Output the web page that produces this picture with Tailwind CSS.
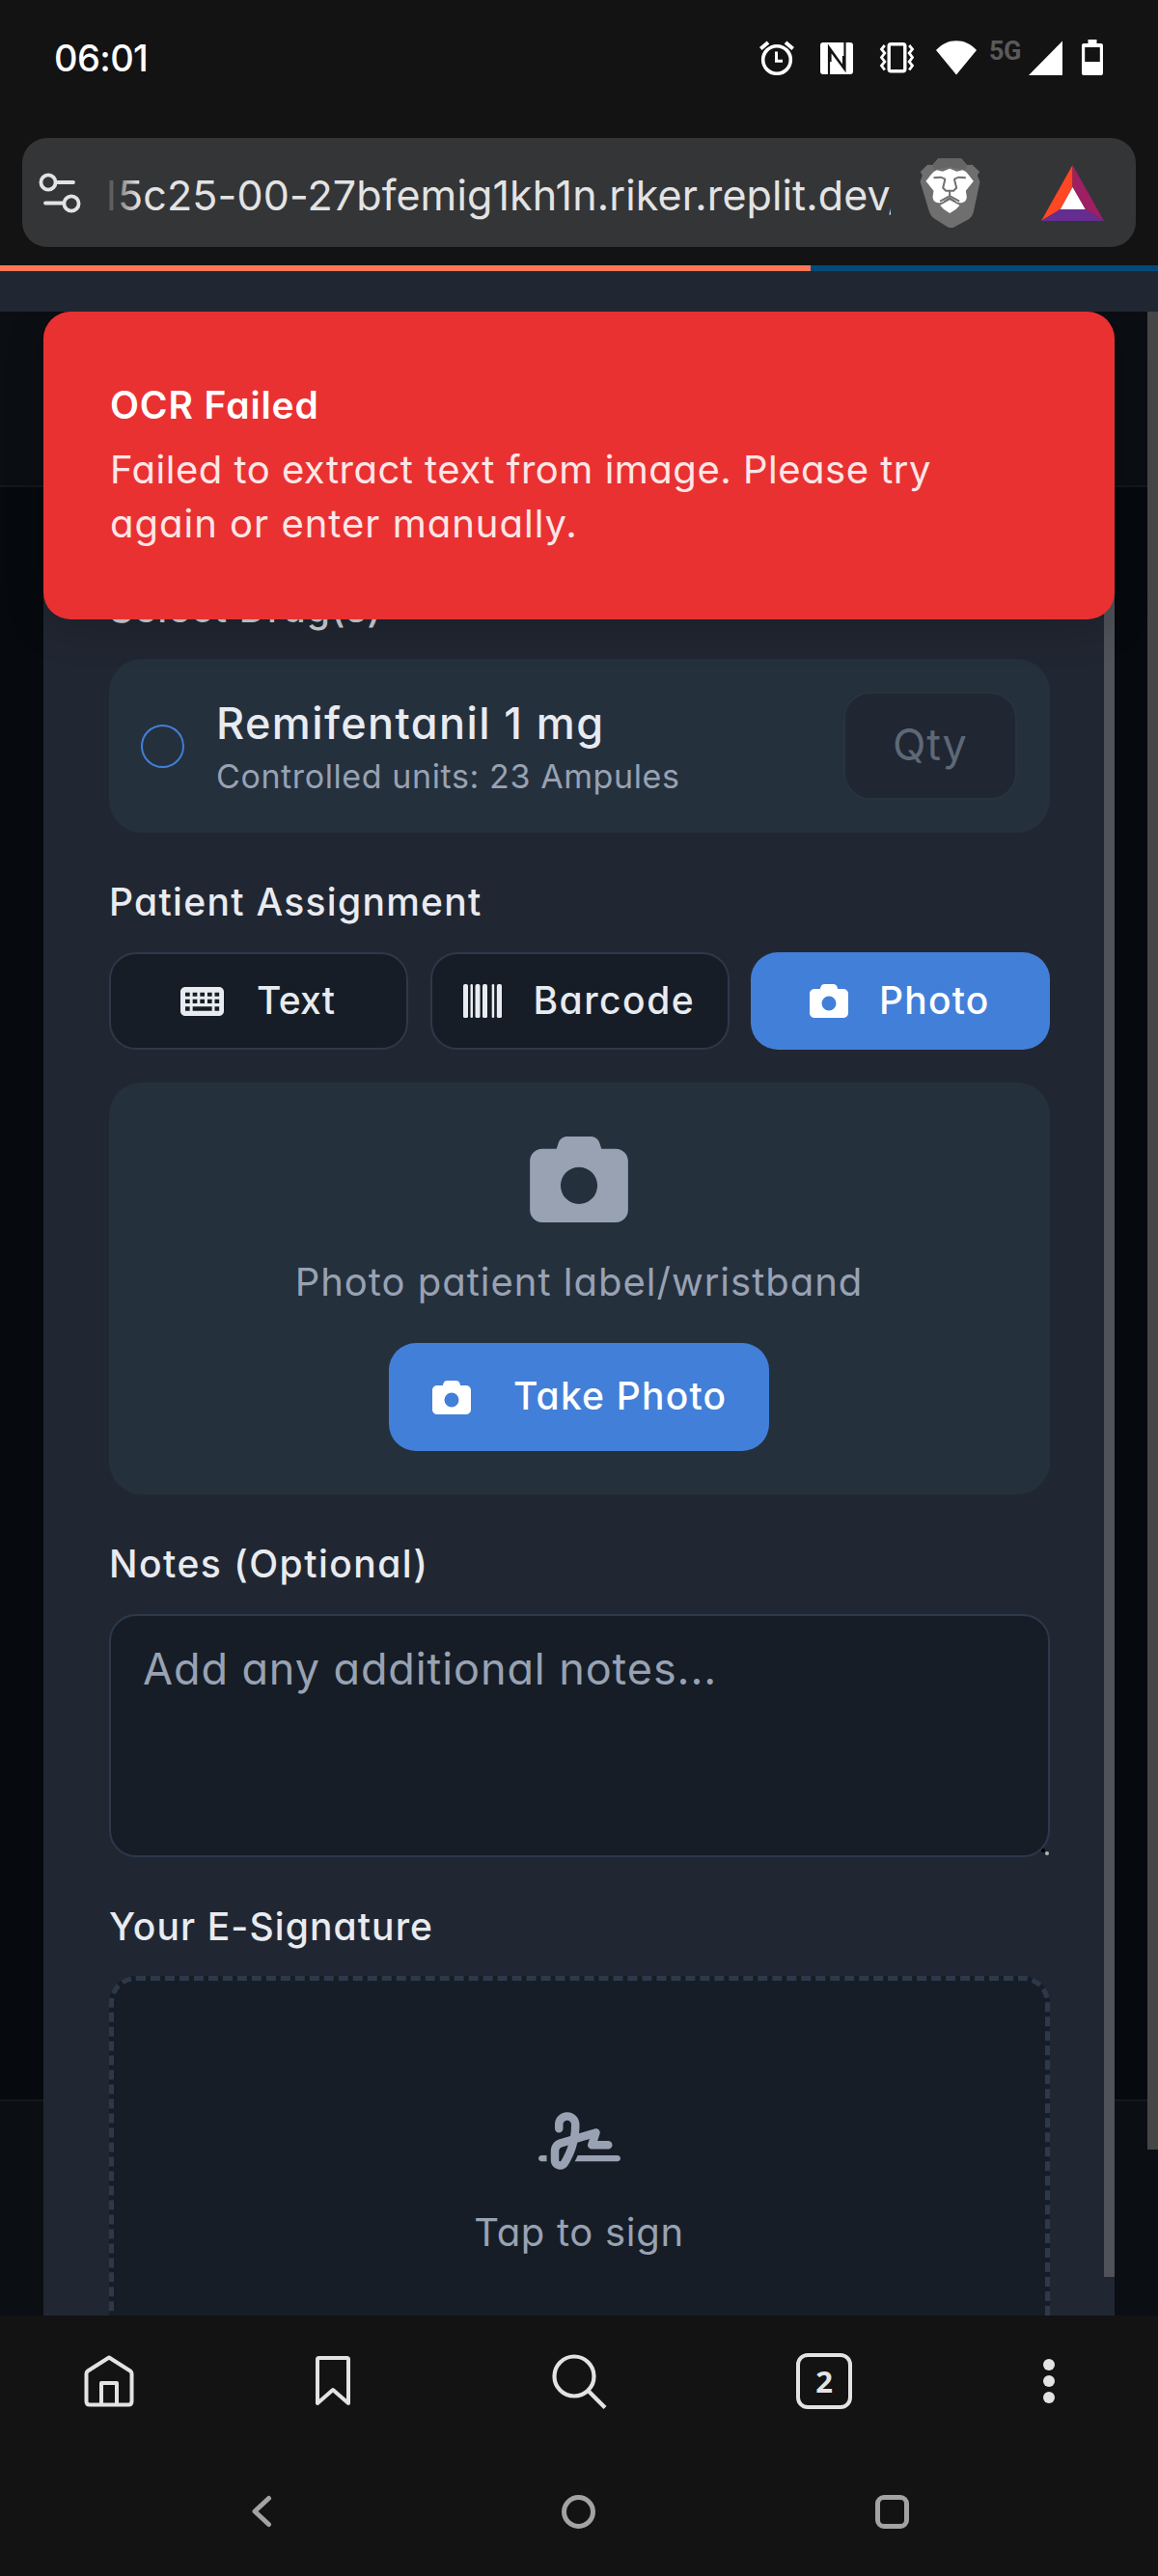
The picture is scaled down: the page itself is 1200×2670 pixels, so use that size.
<!DOCTYPE html>
<html lang="en">
<head>
<meta charset="utf-8">
<title>Patient Assignment</title>
<script src="https://cdn.jsdelivr.net/npm/@tailwindcss/browser@4"></script>
</head>
<body class="bg-[#131313] font-['Inter',sans-serif] [font-feature-settings:'cv11']">
<svg class="hidden">
  <symbol id="camera" viewBox="0 32 512 448"><path fill="currentColor" d="M149.1 64.8L138.7 96H64C28.7 96 0 124.7 0 160V416c0 35.3 28.7 64 64 64H448c35.3 0 64-28.7 64-64V160c0-35.3-28.7-64-64-64H373.3L362.9 64.8C356.4 45.2 338.1 32 317.4 32H194.6c-20.7 0-39 13.2-45.5 32.8zM256 192a96 96 0 1 1 0 192 96 96 0 1 1 0-192z"/></symbol>
</svg>
<div class="flex h-[2670px] w-[1200px] flex-col overflow-hidden bg-[#131313]">

  <!-- Status bar -->
  <header class="flex h-[143px] shrink-0 items-start pl-[56px] text-white">
    <div class="mt-[30px] w-[731px] text-[38px] leading-[60px] font-[450] tracking-[-0.6px]">06:01</div>
    <svg class="mt-[42px] h-[36px] w-[36px]" viewBox="0 0 36 36" fill="none" stroke="currentColor"><circle cx="18" cy="20" r="14.3" stroke-width="3.6"/><path d="M17.5 11.5v9.8h6.5" stroke-width="3"/><path d="M1.300 8.500 9 2M34.700 8.500 27 2" stroke-width="4"/></svg>
    <svg class="mt-[44px] ml-[27px] h-[33px] w-[34px]" viewBox="0 0 34 33"><rect width="34" height="33" rx="3" fill="#fff"/><path d="M9 33V5L24 26V14M25.500 0v28L10.500 8v12" fill="none" stroke="#131313" stroke-width="2.200"/></svg>
    <svg class="mt-[44px] ml-[27px] h-[32px] w-[37px]" viewBox="0 0 37 32" fill="none" stroke="currentColor"><rect x="10.200" y="1.700" width="16.600" height="28" rx="2" stroke-width="3.400"/><path d="M5.800 3 2.500 7l3.300 4-3.300 4.500L5.800 20l-3.300 4 3.300 4.500M31.200 3l3.300 4-3.300 4 3.300 4.500L31.200 20l3.300 4-3.300 4.500" stroke-width="2.800"/></svg>
    <svg class="mt-[42px] ml-[22px] h-[36px] w-[42px]" viewBox="0 0 42 36" fill="currentColor"><path d="M21 35.500 0 10C6 3.500 13 .3 21 .3S36 3.500 42 10z"/></svg>
    <div class="mt-[37px] ml-[13px] w-[41px] font-['Roboto'] text-[27px] leading-[32px] font-bold tracking-[-0.5px] text-[#5a5a5a]">5G</div>
    <svg class="mt-[42px] h-[36px] w-[35px]" viewBox="0 0 35 36" fill="currentColor"><path d="M35 .5V36H0z"/></svg>
    <svg class="mt-[41px] ml-[20px] h-[37px] w-[22px]" viewBox="0 0 22 37"><path fill="#fff" fill-rule="evenodd" d="M6.500 0h9v4H20a2 2 0 0 1 2 2v29a2 2 0 0 1-2 2H2a2 2 0 0 1-2-2V6a2 2 0 0 1 2-2h4.500zM3.200 8v15h15.600V8z"/></svg>
  </header>

  <!-- Address bar -->
  <div class="mx-[23px] flex h-[113px] shrink-0 items-center rounded-[26px] bg-[#343537]">
    <svg class="ml-[17px] h-[42px] w-[44px]" viewBox="0 0 44 42" fill="none" stroke="#e3e3e3" stroke-width="3.800" stroke-linecap="round"><circle cx="10" cy="10" r="7.600"/><path d="M19 10h17M7 31.500h18"/><circle cx="34" cy="32" r="7.600"/></svg>
    <div class="relative ml-[26px] h-[113px] w-[813px] overflow-hidden">
      <div class="pt-[17px] text-[43px] leading-[84px] font-[430] tracking-[0.12px] whitespace-nowrap text-[#e3e3e3]"><span class="inline-block w-[12px]">l</span>5c25-00-27bfemig1kh1n.riker.replit.dev/</div>
      <div class="absolute inset-y-0 left-0 w-[34px] bg-gradient-to-r from-[#343537]/90 to-[#343537]/0"></div>
    </div>
    <svg class="ml-[30px] h-[72px] w-[63px]" viewBox="39 28 188 216">
      <path fill="#6f6f70" d="M96 29h72l18 20 16-1 23 22-7 11 8 20-20 94q-3 14-14 22l-48 26q-12 3-20-2l-38-24q-13-8-18-24L40 101l7-20-6-11 22-22 16 1z"/>
      <path fill="#656566" d="M96 29h72l18 20-6 14-48-8-48 8-6-14z"/>
      <path fill="#fff" d="M92 65l18 4 22-9 22 9 18-4q12 4 18 14l16 20-24 30 3 20q-2 16-16 18-14 0-20-8l-17-11-17 11q-6 8-20 8-14-2-16-18l3-20-24-30 16-20q8-10 18-14z"/>
      <path fill="#fff" d="M132 158l31 16-11 12-20 13-19-13-11-12z"/>
      <path fill="none" stroke="#6f6f70" stroke-width="6" d="M82 89l22-2 14 6M182 89l-22-2-14 6M118 92l-7 28 9 9h24l9-9-7-28M132 131v14l-30 17M132 145l30 17"/>
    </svg>
    <svg class="ml-[63px] h-[58px] w-[65px]" viewBox="0 0 65 58"><path fill="#ff4724" d="M32.500 0v23L19.800 46 0 58z"/><path fill="#9e1f63" d="M32.500 0 65 58 45.700 46 32.500 23z"/><path fill="#662d91" d="M0 58l19.800-12h25.900L65 58z"/><path fill="#fff" d="M32.500 23l13.200 23H19.800z"/></svg>
  </div>
  <div class="mt-[19px] h-[6px] shrink-0 bg-[#004a77]"><div class="h-full bg-[#ff7654]" style="width:70%"></div></div>
  <div class="h-[42px] shrink-0 bg-[#212732]"></div>

  <!-- Page -->
  <main class="relative flex h-[2077px] shrink-0 flex-col overflow-hidden bg-[#0b0e12]">
    <div class="h-[180px] shrink-0"></div>
    <div class="h-[1675px] shrink-0 border-y-2 border-[#14171b] bg-[#06090d]"></div>
    <div class="absolute top-0 right-0 h-[1905px] w-[11px] bg-[#464646]"></div>

    <!-- Dialog -->
    <section class="absolute top-[40px] bottom-0 left-[45px] w-[1110px] bg-[#212732] pt-[240px] pr-[67px] pl-[68px] text-[#e8ebf0]">
      <div class="absolute top-0 right-0 h-[1997px] w-[11px] bg-[#505259]"></div>
      <h2 class="mb-6 text-[39px] leading-[56px] font-medium tracking-[1.1px] text-[#d3d6da]">Select Drug(s)</h2>

      <div class="flex h-[180px] items-center rounded-[34px] bg-[#25303d] pr-[34px] pl-[33px]">
        <span class="h-[45px] w-[45px] rounded-full border-2 border-[#427fd8]"></span>
        <div class="ml-[33px] flex-1 pt-[2px]">
          <div class="text-[45px] leading-[62px] font-medium tracking-[1.4px]">Remifentanil 1 mg</div>
          <div class="text-[34px] leading-[48px] tracking-[0.6px] text-[#98a2b3]">Controlled units: 23 Ampules</div>
        </div>
        <div class="h-[112px] w-[180px] rounded-[28px] border-2 border-[#27333f] bg-[#202632] pl-[49px] text-[45px] leading-[106px] tracking-[0.8px] text-[#5d6877]">Qty</div>
      </div>

      <h2 class="mt-11 mb-6 text-[39px] leading-[56px] font-medium tracking-[1.3px]">Patient Assignment</h2>
      <div class="grid grid-cols-3 gap-[22.5px] text-[39px] leading-[95px] font-medium">
        <div class="flex h-[101px] items-center rounded-[28px] border-2 border-[#2d394b] bg-[#161d26] pl-[72px]">
          <svg class="h-[30px] w-[45px]" viewBox="0 64 576 384"><path fill="currentColor" fill-rule="evenodd" d="M64 64C28.700 64 0 92.700 0 128V384c0 35.300 28.700 64 64 64H512c35.300 0 64-28.700 64-64V128c0-35.300-28.700-64-64-64zM64 136h60v52H64zM162 136h60v52h-60zM260 136h60v52h-60zM358 136h60v52h-60zM454 136h60v52h-60zM64 228h60v52H64zM162 228h60v52h-60zM260 228h60v52h-60zM358 228h60v52h-60zM454 228h60v52h-60zM64 324h60v56H64zM162 324h256v56H162zM454 324h60v56h-60z"/></svg>
          <span class="-mt-[2px] ml-[34px] tracking-[0.3px]">Text</span>
        </div>
        <div class="flex h-[101px] items-center rounded-[28px] border-2 border-[#2d394b] bg-[#161d26] pl-[32px]">
          <svg class="h-[35px] w-[40px]" viewBox="0 32 512 448" fill="currentColor"><rect y="32" width="64" height="448" rx="24"/><rect x="96" y="32" width="32" height="448" rx="16"/><rect x="160" y="32" width="64" height="448" rx="24"/><rect x="256" y="32" width="64" height="448" rx="24"/><rect x="380" y="32" width="32" height="448" rx="16"/><rect x="446" y="32" width="66" height="448" rx="24"/></svg>
          <span class="-mt-[2px] ml-[33px] tracking-[1.5px]">Barcode</span>
        </div>
        <div class="flex h-[101px] items-center rounded-[28px] bg-[#427fd8] pl-[61px] text-white">
          <svg class="h-[35px] w-[40px]"><use href="#camera"/></svg>
          <span class="-mt-[2px] ml-[32px] tracking-[1.2px]">Photo</span>
        </div>
      </div>

      <div class="mt-[34px] flex h-[427px] flex-col items-center rounded-[34px] bg-[#25303d] pt-[56px] pr-[1px]">
        <svg class="h-[89px] w-[102px] text-[#98a2b3]"><use href="#camera"/></svg>
        <p class="mt-[34px] text-[40px] leading-[56px] tracking-[1px] text-[#98a2b3]">Photo patient label/wristband</p>
        <div class="mt-[35px] flex h-[112px] w-[394px] items-center rounded-[28px] bg-[#427fd8] pl-[45px] text-white">
          <svg class="h-[35px] w-[40px]"><use href="#camera"/></svg>
          <span class="-mt-[2px] ml-[44px] text-[39px] leading-[56px] font-medium tracking-[1.2px]">Take Photo</span>
        </div>
      </div>

      <h2 class="mt-11 mb-6 text-[39px] leading-[56px] font-medium tracking-[1.5px]">Notes (Optional)</h2>
      <div class="relative h-[252px] rounded-[28px] border-2 border-[#2d394b] bg-[#161d26] pt-[24px] pl-[33px] text-[45px] leading-[62px] tracking-[0.9px] text-[#98a2b3]">Add any additional notes...
        <span class="absolute right-[3px] bottom-[3px] h-[4px] w-[4px] rounded-full bg-black"></span>
        <span class="absolute -right-[1px] bottom-[0px] h-[4px] w-[4px] rounded-full bg-[#b4b6b9]"></span>
      </div>

      <h2 class="mt-11 mb-[23px] text-[39px] leading-[56px] font-medium tracking-[1.1px]">Your E-Signature</h2>
      <div class="flex h-[427px] flex-col items-center rounded-[28px] border-5 border-dashed border-[#2d394b] bg-[#161d26] pt-[136px] pr-[1px] text-[#98a2b3]">
        <svg class="h-[60px] w-[85px]" viewBox="0 32 640 448"><path fill="currentColor" d="M192 128c0-17.700 14.300-32 32-32s32 14.300 32 32v7.800c0 27.700-2.400 55.300-7.100 82.500l-84.400 25.300c-40.600 12.200-68.400 49.600-68.400 92v71.900c0 40 32.500 72.500 72.500 72.500c26 0 50-13.900 62.900-36.500l13.900-24.300c26.800-47 46.500-97.700 58.400-150.500l94.400-28.300-12.500 37.500c-3.300 9.800-1.600 20.500 4.400 28.800s15.700 13.300 26 13.300H544c17.700 0 32-14.300 32-32s-14.300-32-32-32H460.400l18-53.900c3.800-11.300 .9-23.800-7.400-32.400s-20.700-11.800-32.200-8.400L316.400 198.100c2.400-20.700 3.600-41.400 3.600-62.300V128c0-53-43-96-96-96s-96 43-96 96v32c0 17.700 14.300 32 32 32s32-14.300 32-32V128zm-9.200 177l49-14.700c-10.400 33.800-24.500 66.400-42.100 97.200l-13.900 24.300c-1.500 2.600-4.300 4.300-7.400 4.300c-4.700 0-8.500-3.800-8.500-8.500V335.600c0-14.100 9.300-26.600 22.800-30.700zM24 368c-13.300 0-24 10.700-24 24s10.700 24 24 24H64.300c-.2-2.800-.3-5.600-.3-8.500V368H24zm592 48c13.300 0 24-10.700 24-24s-10.700-24-24-24H305.900c-6.700 16.300-14.200 32.300-22.300 48H616z"/></svg>
        <p class="mt-[37px] text-[40px] leading-[56px] tracking-[0.7px]">Tap to sign</p>
      </div>
    </section>

    <!-- Toast -->
    <div class="absolute top-0 left-[45px] h-[319px] w-[1110px] rounded-[28px] bg-[#e93132] pt-[69px] pl-[69px] text-white shadow-[0_10px_40px_rgba(0,0,0,0.2)]">
      <div class="text-[39px] leading-[56px] font-semibold tracking-[0.9px]">OCR Failed</div>
      <div class="mt-[11px] text-[40px] leading-[56px] text-[#fde6e6]">
        <div class="tracking-[0.500px]">Failed to extract text from image. Please try</div>
        <div class="tracking-[1px]">again or enter manually.</div>
      </div>
    </div>
  </main>

  <!-- Browser toolbar -->
  <nav class="flex h-[136px] shrink-0 items-center pl-[87px] text-[#e3e3e3]">
    <svg class="h-[54px] w-[52px]" viewBox="0 0 52 54" fill="none" stroke="currentColor" stroke-width="4" stroke-linejoin="round"><path d="M2.500 19.500Q2.500 17.500 4 16.500L26 2.500l22 14Q49.500 17.500 49.500 19.500V48q0 3.500-3.500 3.500H6q-3.500 0-3.500-3.500zM18 51V29h16v22"/></svg>
    <svg class="ml-[188px] h-[52px] w-[36px]" viewBox="0 0 36 52" fill="none" stroke="currentColor" stroke-width="4" stroke-linejoin="round"><path d="M2 3.500Q2 2 3.500 2h29Q34 2 34 3.500V49L18 35 2 49z"/></svg>
    <svg class="ml-[209px] h-[57px] w-[57px]" viewBox="0 0 57 57" fill="none" stroke="currentColor" stroke-width="4.200"><circle cx="23" cy="23" r="20.500"/><path d="M37.500 38 55 55.500"/></svg>
    <div class="ml-[196px] flex h-[58px] w-[58px] items-center justify-center rounded-[12px] border-[4.500px] border-current font-['Noto_Sans'] text-[31px] leading-[48px] font-bold">2</div>
    <div class="ml-[198px] flex flex-col gap-[5px]"><i class="h-3 w-3 rounded-full bg-current"></i><i class="h-3 w-3 rounded-full bg-current"></i><i class="h-3 w-3 rounded-full bg-current"></i></div>
  </nav>

  <!-- System navigation -->
  <nav class="flex h-[134px] shrink-0 items-center pl-[260px] text-[#a3a3a3]">
    <svg class="h-[34px] w-[22px]" viewBox="0 0 22 34" fill="none" stroke="currentColor" stroke-width="5" stroke-linecap="round" stroke-linejoin="round"><path d="M18.500 3.500 4 17l14.500 13.500"/></svg>
    <i class="ml-[300px] h-[35px] w-[35px] rounded-full border-[5.500px] border-current"></i>
    <i class="ml-[290px] h-[35px] w-[35px] rounded-[9px] border-[5.500px] border-current"></i>
  </nav>
</div>
</body>
</html>
